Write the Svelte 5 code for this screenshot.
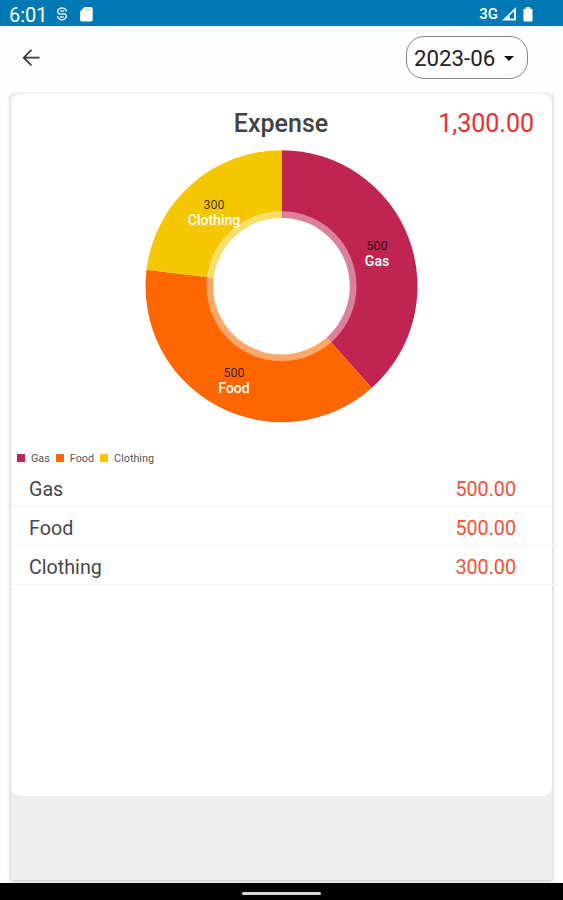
<script>
  const items = [
    { name: "Gas", value: 500, color: "#c02552", x: 377, y: 249.6 },
    { name: "Food", value: 500, color: "#ff6600", x: 234, y: 376.6 },
    { name: "Clothing", value: 300, color: "#f5c700", x: 214, y: 209.4 },
  ];
  const total = items.reduce((sum, item) => sum + item.value, 0);

  const cx = 281.5;
  const cy = 286.2;
  const radius = 136;

  function point(fraction) {
    const angle = fraction * Math.PI * 2;
    return `${cx + radius * Math.sin(angle)} ${cy - radius * Math.cos(angle)}`;
  }

  let start = 0;
  const slices = items.map((item) => {
    const end = start + item.value / total;
    const d = `M${cx} ${cy} L${point(start)} A${radius} ${radius} 0 0 1 ${point(end)} Z`;
    start = end;
    return { ...item, d };
  });

  function money(value) {
    return value.toLocaleString("en-US", { minimumFractionDigits: 2 });
  }
</script>

<div class="screen">
  <div class="status">
    <span class="clock">6:01</span>
    <svg class="shield" width="12" height="14" viewBox="0 0 12 14">
      <path
        d="M10.3 4.6V3.2C9.2 1.8 7.8 1 6 1S2.8 1.8 1.7 3.2v2.1L3 6.9h6l1.3 1.6v1.7C9.2 12 7.8 13 6 13s-3.2-1-4.3-2.8V9M4.2 4.1h4M3.8 9.9h4"
        fill="none"
        stroke="#d3e8f4"
        stroke-width="1.5"
      />
    </svg>
    <svg class="sd" width="13" height="15" viewBox="0 0 13 15">
      <path
        d="M4.5 0H11a1.7 1.7 0 0 1 1.7 1.7v11.1a1.7 1.7 0 0 1-1.7 1.7H1.8A1.7 1.7 0 0 1 .1 12.8V4.5Z"
        fill="#fff"
      />
      <path d="M5 2.7h5.5" stroke="#b5d8ea" stroke-width="1.3" />
    </svg>
    <span class="network">3G</span>
    <svg class="signal" width="15" height="14" viewBox="0 0 15 14">
      <path d="M14 0v13.5H0Z" fill="#e9f4fa" />
      <path d="M7.8 8.4 12 4.2v7.3H7.8Z" fill="#0079b5" />
    </svg>
    <svg class="battery" width="10" height="15" viewBox="0 0 10 15">
      <path
        d="M3 0h4v1.7h1.3A1.2 1.2 0 0 1 9.5 2.9v10.4a1.2 1.2 0 0 1-1.2 1.2H1.7a1.2 1.2 0 0 1-1.2-1.2V2.9a1.2 1.2 0 0 1 1.2-1.2H3Z"
        fill="#fff"
      />
    </svg>
  </div>

  <header>
    <button class="back" aria-label="Back">
      <svg width="18" height="18" viewBox="0 0 18 18">
        <path
          d="M17.5 8.7H2M9.5 .9 1.7 8.7l7.8 7.8"
          fill="none"
          stroke="#383838"
          stroke-width="1.7"
        />
      </svg>
    </button>
    <button class="month">
      <span>2023-06</span>
      <svg width="10" height="5" viewBox="0 0 10 5">
        <path d="M0 0h10L5 5Z" fill="#111" />
      </svg>
    </button>
  </header>

  <div class="panel">
    <div class="card">
      <div class="title">
        <h1>Expense</h1>
        <span class="total">{money(total)}</span>
      </div>

      <svg class="chart" width="541" height="300" viewBox="11 148 541 300">
        {#each slices as slice}
          <path d={slice.d} fill={slice.color} />
        {/each}
        <circle {cx} {cy} r="75" fill="#fff" fill-opacity="0.42" />
        <circle {cx} {cy} r="68.3" fill="#fff" />
        {#each slices as slice}
          <text class="value" x={slice.x} y={slice.y}>{slice.value}</text>
          <text class="name" x={slice.x} y={slice.y + 16}>{slice.name}</text>
        {/each}
      </svg>

      <div class="legend">
        {#each items as item}
          <i style="background: {item.color}"></i>
          <span>{item.name}</span>
        {/each}
      </div>

      <ul>
        {#each items as item}
          <li>
            <span>{item.name}</span>
            <span class="amount">{money(item.value)}</span>
          </li>
        {/each}
      </ul>
    </div>
  </div>

  <div class="nav"><i></i></div>
</div>

<style>
  :global(body) {
    margin: 0;
  }
  .screen {
    width: 563px;
    height: 900px;
    display: flex;
    flex-direction: column;
    overflow: hidden;
    background: #fefefe;
    font-family: Roboto, sans-serif;
    color: #484848;
  }
  .status {
    height: 26px;
    flex: none;
    box-sizing: border-box;
    display: flex;
    align-items: center;
    padding: 2px 30px 0 9px;
    background: #0079b5;
    color: #fff;
  }
  .clock {
    width: 47px;
    padding-top: 1px;
    font-size: 20px;
    line-height: 24px;
  }
  .sd {
    margin-left: 12px;
  }
  .network {
    margin-left: auto;
    font-size: 15px;
    font-weight: 500;
  }
  .signal {
    margin-left: 4px;
  }
  .battery {
    margin-left: 6px;
  }
  header {
    height: 68px;
    flex: none;
    box-sizing: border-box;
    display: flex;
    justify-content: space-between;
    align-items: flex-start;
    padding: 10px 35px 0 22px;
  }
  button {
    padding: 0;
    border: none;
    background: none;
    font-family: inherit;
  }
  .back {
    height: 43px;
    display: flex;
    align-items: center;
  }
  .month {
    width: 122px;
    height: 43px;
    box-sizing: border-box;
    display: flex;
    align-items: center;
    justify-content: space-between;
    padding: 1px 13px 0 7px;
    border: 1px solid #858585;
    border-radius: 18px;
    font-size: 22.3px;
    color: #222;
  }
  .panel {
    height: 786px;
    flex: none;
    margin: 0 11px 3px;
    background: #eee;
    box-shadow: 0 1px 4px rgba(0, 0, 0, 0.28);
  }
  .card {
    height: 702px;
    box-sizing: border-box;
    border-radius: 10px;
    background: #fff;
  }
  .title {
    height: 54px;
    display: grid;
    grid-template-columns: 1fr auto 1fr;
    align-items: center;
    padding: 5px 18px 0 17px;
    box-sizing: border-box;
  }
  h1 {
    grid-column: 2;
    margin: 0;
    font-size: 25px;
    font-weight: 500;
    color: #424242;
  }
  .total {
    justify-self: end;
    font-size: 25px;
    color: #ee2e2e;
  }
  .chart {
    display: block;
  }
  .chart text {
    text-anchor: middle;
  }
  .value {
    font-size: 12.5px;
    fill: #000;
    fill-opacity: 0.75;
  }
  .name {
    font-size: 14px;
    font-weight: 500;
    fill: #fff;
  }
  .legend {
    height: 20px;
    display: flex;
    align-items: center;
    padding-left: 6px;
    font-size: 10.8px;
    color: #555;
  }
  .legend i {
    width: 8px;
    height: 8px;
    margin-right: 6px;
  }
  .legend span {
    margin-right: 6px;
  }
  ul {
    margin: 0 -6px 0 0;
    padding: 0;
    list-style: none;
  }
  li {
    height: 39px;
    box-sizing: border-box;
    display: flex;
    justify-content: space-between;
    align-items: center;
    padding: 4px 42px 0 18px;
    border-bottom: 1px solid #f2f2f2;
    font-size: 19.7px;
  }
  .amount {
    color: #f8502f;
  }
  .nav {
    height: 17px;
    flex: none;
    display: flex;
    justify-content: center;
    align-items: center;
    background: #000;
  }
  .nav i {
    width: 79px;
    height: 3px;
    margin-top: 3px;
    border-radius: 2px;
    background: #d6d8d7;
  }
</style>
